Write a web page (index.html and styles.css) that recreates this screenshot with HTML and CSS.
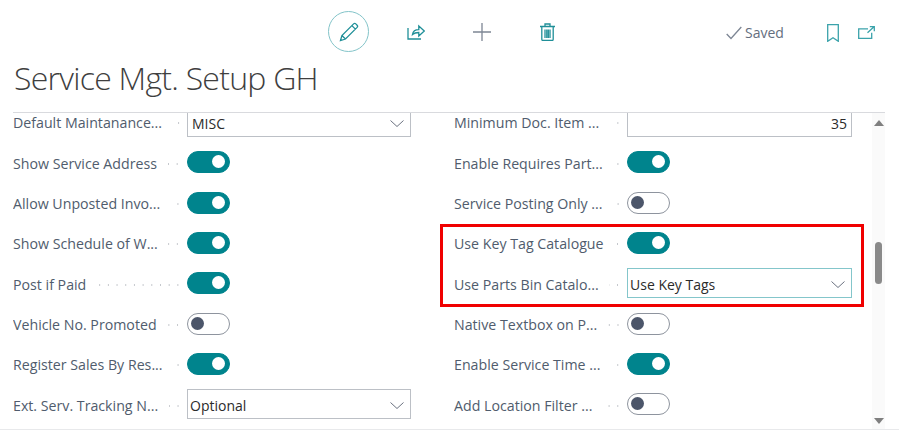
FILE: index.html
```html
<!DOCTYPE html>
<html lang="en">
<head>
<meta charset="utf-8">
<title>Service Mgt. Setup GH</title>
<link rel="stylesheet" href="styles.css">
</head>
<body>
<div class="page">
  <header class="actions">
    <div class="tools">
      <button class="tool tool-edit"><svg width="20" height="20" viewBox="0 0 20 20" class="teal"><path d="M1.5 18.5l1.4-5L14.6 1.900a1.600 1.600 0 0 1 2.200 0l1.300 1.300a1.600 1.600 0 0 1 0 2.200L6.500 17zM2.900 13.500l3.600 3.500M12.900 3.600l3.500 3.500"/></svg></button>
      <button class="tool"><svg width="18" height="16" viewBox="0 0 18 16" class="teal"><path d="M1 4v11h13M5.500 10.500c.5-3.200 2.800-4.800 6.300-4.800V2l5.500 5-5.500 5V8.500c-2.700 0-4.600.5-6.300 2z"/></svg></button>
      <button class="tool"><svg width="18" height="18" viewBox="0 0 18 18" class="grey"><path d="M9 0v18M0 9h18"/></svg></button>
      <button class="tool"><svg width="15" height="18" viewBox="0 0 15 18" class="teal"><path d="M0 3.500h15M5 3.500V1h5v2.500M1.800 3.500v12.700c0 .8.500 1.300 1.300 1.300h8.800c.8 0 1.300-.5 1.300-1.300V3.500M5 6.500v8.500M6.800 6.500v8.500M8.300 6.500v8.500M10 6.500v8.500"/></svg></button>
    </div>
    <div class="status">
      <span class="saved"><svg width="16" height="14" viewBox="0 0 16 14" class="grey"><path d="M.7 8l4.300 4.500L15.300 1"/></svg>Saved</span>
      <svg class="soft bookmark" width="12" height="18" viewBox="0 0 12 18"><path d="M.7.700h10.600v16.600L6 13.700.7 17.300z"/></svg>
      <svg class="soft" width="17" height="13" viewBox="0 0 17 13"><path d="M10 2.800H.7v9.500h13V6.800M9.500 6.800L16 .8M11.800.700h4.500v4.500"/></svg>
    </div>
  </header>
  <h1 class="title">Service Mgt. Setup GH</h1>
  <main class="content">
    <div class="columns">
      <section class="column">
        <div class="row"><span class="label">Default Maintanance...</span><span class="leader"></span><div class="select clipped">MISC<svg class="chev" width="14" height="7" viewBox="0 0 14 7"><path d="M.5.500L7 6.500 13.500.500"/></svg></div></div>
        <div class="row"><span class="label">Show Service Address</span><span class="leader"></span><span class="toggle on"></span></div>
        <div class="row"><span class="label">Allow Unposted Invo...</span><span class="leader"></span><span class="toggle on"></span></div>
        <div class="row"><span class="label">Show Schedule of W...</span><span class="leader"></span><span class="toggle on"></span></div>
        <div class="row"><span class="label">Post if Paid</span><span class="leader"></span><span class="toggle on"></span></div>
        <div class="row"><span class="label">Vehicle No. Promoted</span><span class="leader"></span><span class="toggle"></span></div>
        <div class="row"><span class="label">Register Sales By Res...</span><span class="leader"></span><span class="toggle on"></span></div>
        <div class="row"><span class="label">Ext. Serv. Tracking N...</span><span class="leader"></span><div class="select">Optional<svg class="chev" width="14" height="7" viewBox="0 0 14 7"><path d="M.5.500L7 6.500 13.500.500"/></svg></div></div>
      </section>
      <section class="column column-right">
        <div class="row"><span class="label">Minimum Doc. Item ...</span><span class="leader"></span><div class="select clipped number">35</div></div>
        <div class="row"><span class="label">Enable Requires Part...</span><span class="leader"></span><span class="toggle on"></span></div>
        <div class="row"><span class="label">Service Posting Only ...</span><span class="leader"></span><span class="toggle"></span></div>
        <div class="row"><span class="label">Use Key Tag Catalogue</span><span class="leader"></span><span class="toggle on"></span></div>
        <div class="row"><span class="label">Use Parts Bin Catalo...</span><span class="leader"></span><div class="select focus">Use Key Tags<svg class="chev" width="14" height="7" viewBox="0 0 14 7"><path d="M.5.500L7 6.500 13.500.500"/></svg></div></div>
        <div class="row"><span class="label">Native Textbox on P...</span><span class="leader"></span><span class="toggle"></span></div>
        <div class="row"><span class="label">Enable Service Time ...</span><span class="leader"></span><span class="toggle on"></span></div>
        <div class="row"><span class="label">Add Location Filter ...</span><span class="leader"></span><span class="toggle"></span></div>
      </section>
    </div>
    <div class="scrollbar">
      <span class="arrow up"></span>
      <span class="thumb"></span>
      <span class="arrow down"></span>
    </div>
    <div class="highlight"></div>
  </main>
  <div class="foot"></div>
</div>
</body>
</html>
```
FILE: styles.css
```css
html, body { margin: 0; padding: 0; background: #fff; }
body { font-family: "Open Sans", "Noto Sans", sans-serif; color: #505c6d; overflow: hidden; }
.page { width: 899px; height: 430px; display: flex; flex-direction: column; overflow: hidden; }
svg { display: block; flex: none; fill: none; stroke-width: 1.3; }
.teal { stroke: #1f8f98; }
.soft { stroke: #3ba3ab; }
.grey { stroke: #7d8694; }
.actions { height: 64px; flex: none; position: relative; }
.tools { position: absolute; left: 328px; top: 11px; display: flex; align-items: center; }
.tool { width: 41px; height: 41px; padding: 0; margin-right: 25px; border: 0; background: none; display: flex; align-items: center; justify-content: center; border-radius: 50%; }
.tool-edit { border: 1px solid #83c4c9; margin-right: 26px; }
.status { position: absolute; left: 726px; top: 23px; display: flex; align-items: center; }
.saved { display: flex; align-items: center; gap: 3px; font-size: 14px; color: #646e7e; margin-right: 43px; }
.bookmark { margin-right: 19px; }
.title { margin: 0; padding-left: 14px; height: 48px; font-size: 32px; letter-spacing: -0.75px; line-height: 28px; font-weight: 300; color: #3f3f3f; flex: none; white-space: nowrap; }
.content { position: relative; flex: none; height: 317px; margin-left: 13px; margin-right: 14px; border-top: 1px solid #d9dade; display: flex; box-sizing: border-box; }
.foot { height: 1px; flex: none; background: #e8e9eb; }
.columns { display: grid; grid-template-columns: 398px 398px; column-gap: 43px; width: 859px; }
.column { display: flex; flex-direction: column; height: 316px; overflow: hidden; }
.row { height: 40.33px; flex: none; display: flex; align-items: center; font-size: 14.2px; }
.row:first-child { margin-top: -11.2px; }
.label { flex: none; white-space: nowrap; color: #505c6d; padding-top: 2px; }
.leader { flex: 1; min-width: 4px; margin: 3px 5px 0 10.5px; height: 2px; background-image: radial-gradient(circle, #c4c7cc 0.8px, transparent 1px); background-size: 8.7px 2px; background-position: right; background-repeat: repeat-x; }
.toggle { flex: none; width: 43px; height: 22px; margin-right: 181px; border-radius: 11px; border: 1px solid #8e949e; background: #fff; box-sizing: border-box; position: relative; }
.toggle::after { content: ""; position: absolute; left: 3px; top: 3px; width: 13px; height: 13px; border-radius: 50%; background: #4c566a; }
.toggle.on { background: #00848d; border-color: #00848d; }
.toggle.on::after { left: auto; right: 4px; background: #fff; }
.select { flex: none; width: 224px; height: 30px; box-sizing: border-box; border: 1px solid #bcc0c6; padding: 3px 0 0 2px; display: flex; align-items: center; justify-content: space-between; color: #2b2b2b; font-size: 14px; }
.select.clipped { padding-left: 4px; }
.select.number { justify-content: flex-end; padding-right: 4px; }
.select.focus { border-color: #84c6cb; }
.column-right .select { width: 225px; }
.column-right .toggle { margin-right: 182px; }
.chev { margin-right: 6px; stroke: #6b7280; stroke-width: 1; }
.scrollbar { position: absolute; left: 859px; top: 0; bottom: 0; width: 13px; background: #fafafa; }
.thumb { position: absolute; left: 3px; top: 129px; width: 7px; height: 42px; border-radius: 4px; background: #8a8a8a; }
.arrow { position: absolute; left: 2px; width: 0; height: 0; border-left: 5px solid transparent; border-right: 5px solid transparent; }
.arrow.up { top: 7px; border-bottom: 6px solid #7f7f7f; }
.arrow.down { bottom: 5px; border-top: 6px solid #7f7f7f; }
.highlight { position: absolute; left: 427px; top: 111px; width: 418px; height: 77px; border: 3px solid #f00000; }
```
